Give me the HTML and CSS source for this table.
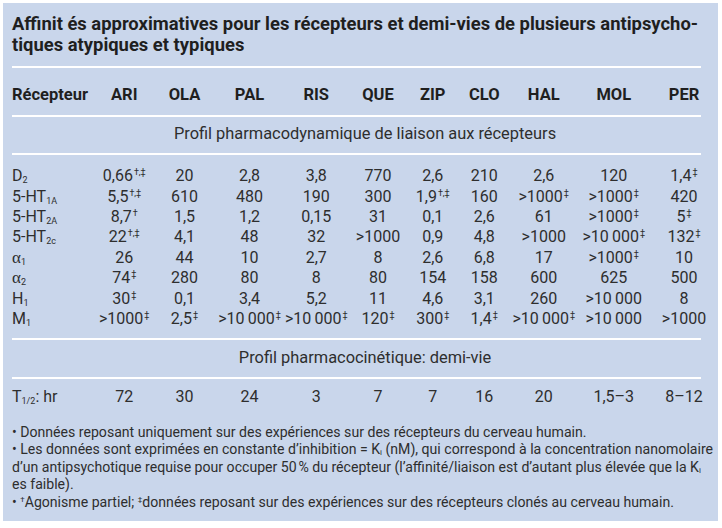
FILE: index.html
```html
<!DOCTYPE html>
<html lang="fr">
<head>
<meta charset="utf-8">
<title>Affinités approximatives</title>
<link rel="stylesheet" href="styles.css">
</head>
<body>
<div class="panel">
  <h1 class="title">Affinit és approximatives pour les récepteurs et demi-vies de plusieurs antipsycho-<br>tiques atypiques et typiques</h1>
  <div class="rule"></div>
  <div class="row head">
    <span class="lab">Récepteur</span><span>ARI</span><span>OLA</span><span>PAL</span><span>RIS</span><span>QUE</span><span>ZIP</span><span>CLO</span><span>HAL</span><span>MOL</span><span>PER</span>
  </div>
  <div class="rule"></div>
  <div class="section">Profil pharmacodynamique de liaison aux récepteurs</div>
  <div class="rule"></div>
  <div class="body">
    <div class="row"><span class="lab">D<sub>2</sub></span><span>0,66<sup>†,‡</sup></span><span>20</span><span>2,8</span><span>3,8</span><span>770</span><span>2,6</span><span>210</span><span>2,6</span><span>120</span><span>1,4<sup>‡</sup></span></div>
    <div class="row"><span class="lab">5-HT<sub>1A</sub></span><span>5,5<sup>†,‡</sup></span><span>610</span><span>480</span><span>190</span><span>300</span><span>1,9<sup>†,‡</sup></span><span>160</span><span>&gt;1000<sup>‡</sup></span><span>&gt;1000<sup>‡</sup></span><span>420</span></div>
    <div class="row"><span class="lab">5-HT<sub>2A</sub></span><span>8,7<sup>†</sup></span><span>1,5</span><span>1,2</span><span>0,15</span><span>31</span><span>0,1</span><span>2,6</span><span>61</span><span>&gt;1000<sup>‡</sup></span><span>5<sup>‡</sup></span></div>
    <div class="row"><span class="lab">5-HT<sub>2c</sub></span><span>22<sup>†,‡</sup></span><span>4,1</span><span>48</span><span>32</span><span>&gt;1000</span><span>0,9</span><span>4,8</span><span>&gt;1000</span><span>&gt;10&#8201;000<sup>‡</sup></span><span>132<sup>‡</sup></span></div>
    <div class="row"><span class="lab"><span class="alpha">α</span><sub>1</sub></span><span>26</span><span>44</span><span>10</span><span>2,7</span><span>8</span><span>2,6</span><span>6,8</span><span>17</span><span>&gt;1000<sup>‡</sup></span><span>10</span></div>
    <div class="row"><span class="lab"><span class="alpha">α</span><sub>2</sub></span><span>74<sup>‡</sup></span><span>280</span><span>80</span><span>8</span><span>80</span><span>154</span><span>158</span><span>600</span><span>625</span><span>500</span></div>
    <div class="row"><span class="lab">H<sub>1</sub></span><span>30<sup>‡</sup></span><span>0,1</span><span>3,4</span><span>5,2</span><span>11</span><span>4,6</span><span>3,1</span><span>260</span><span>&gt;10&#8201;000</span><span>8</span></div>
    <div class="row"><span class="lab">M<sub>1</sub></span><span>&gt;1000<sup>‡</sup></span><span>2,5<sup>‡</sup></span><span>&gt;10&#8201;000<sup>‡</sup></span><span>&gt;10&#8201;000<sup>‡</sup></span><span>120<sup>‡</sup></span><span>300<sup>‡</sup></span><span>1,4<sup>‡</sup></span><span>&gt;10&#8201;000<sup>‡</sup></span><span>&gt;10&#8201;000</span><span>&gt;1000</span></div>
  </div>
  <div class="rule"></div>
  <div class="section">Profil pharmacocinétique: demi-vie</div>
  <div class="rule"></div>
  <div class="row half"><span class="lab">T<sub>1/2</sub>: hr</span><span>72</span><span>30</span><span>24</span><span>3</span><span>7</span><span>7</span><span>16</span><span>20</span><span>1,5–3</span><span>8–12</span></div>
  <ul class="notes">
    <li>• Données reposant uniquement sur des expériences sur des récepteurs du cerveau humain.</li>
    <li>• Les données sont exprimées en constante d’inhibition = K<sub>i</sub> (nM), qui correspond à la concentration nanomolaire<br>d’un antipsychotique requise pour occuper 50&#8239;% du récepteur (l’affinité/liaison est d’autant plus élevée que la K<sub>i</sub><br>es faible).</li>
    <li>• <sup>†</sup>Agonisme partiel; <sup>‡</sup>données reposant sur des expériences sur des récepteurs clonés au cerveau humain.</li>
  </ul>
</div>
</body>
</html>
```

FILE: styles.css
```css
html, body {
  margin: 0;
  padding: 0;
  background: #ffffff;
}

body {
  font-family: Roboto, "Liberation Sans", sans-serif;
  color: #2e2e2e;
}

.panel {
  margin: 3px;
  width: 715px;
  height: 518px;
  padding: 10px 0 0 9px;
  box-sizing: border-box;
  background: #c9d6eb;
  overflow: hidden;
}

.title {
  margin: 0;
  font-size: 18.4px;
  line-height: 21px;
  font-weight: 700;
  color: #1f1f1f;
  letter-spacing: 0;
  white-space: nowrap;
}

.rule {
  height: 2px;
  background: #ffffff;
  margin-right: 17px;
}

.title + .rule {
  margin-top: 10.5px;
}

.row {
  display: grid;
  grid-template-columns: 83px 58.5px 62px 68px 65.5px 58px 51.5px 51.5px 67.5px 72.5px 68px;
  font-size: 16px;
  line-height: 20.4px;
  white-space: nowrap;
}

.row > span {
  display: block;
  text-align: center;
}

.row > .lab {
  text-align: left;
}

.head {
  font-weight: 700;
  color: #1f1f1f;
  padding: 17px 0 10.6px;
  line-height: 20px;
  font-size: 16.5px;
}

.section {
  font-size: 16.4px;
  line-height: 20px;
  text-align: center;
  padding: 7px 0 9px;
}

.body + .rule + .section {
  padding-top: 8px;
}

.body {
  padding: 11px 0 8.8px;
}

.half {
  padding-top: 8px;
}

sub {
  font-size: 9px;
  vertical-align: -2px;
  line-height: 0;
}

sup {
  font-size: 9px;
  vertical-align: 6px;
  line-height: 0;
  margin-left: 1px;
}

.alpha {
  font-family: "Liberation Serif", serif;
  font-size: 17px;
}

.notes {
  list-style: none;
  margin: 16px 0 0;
  padding: 0;
  font-size: 14.1px;
  line-height: 17.6px;
  white-space: nowrap;
}

.notes sub {
  font-size: 8px;
  vertical-align: -1px;
}

.notes sup {
  font-size: 8px;
  vertical-align: 5px;
  margin-left: 0;
}
```
